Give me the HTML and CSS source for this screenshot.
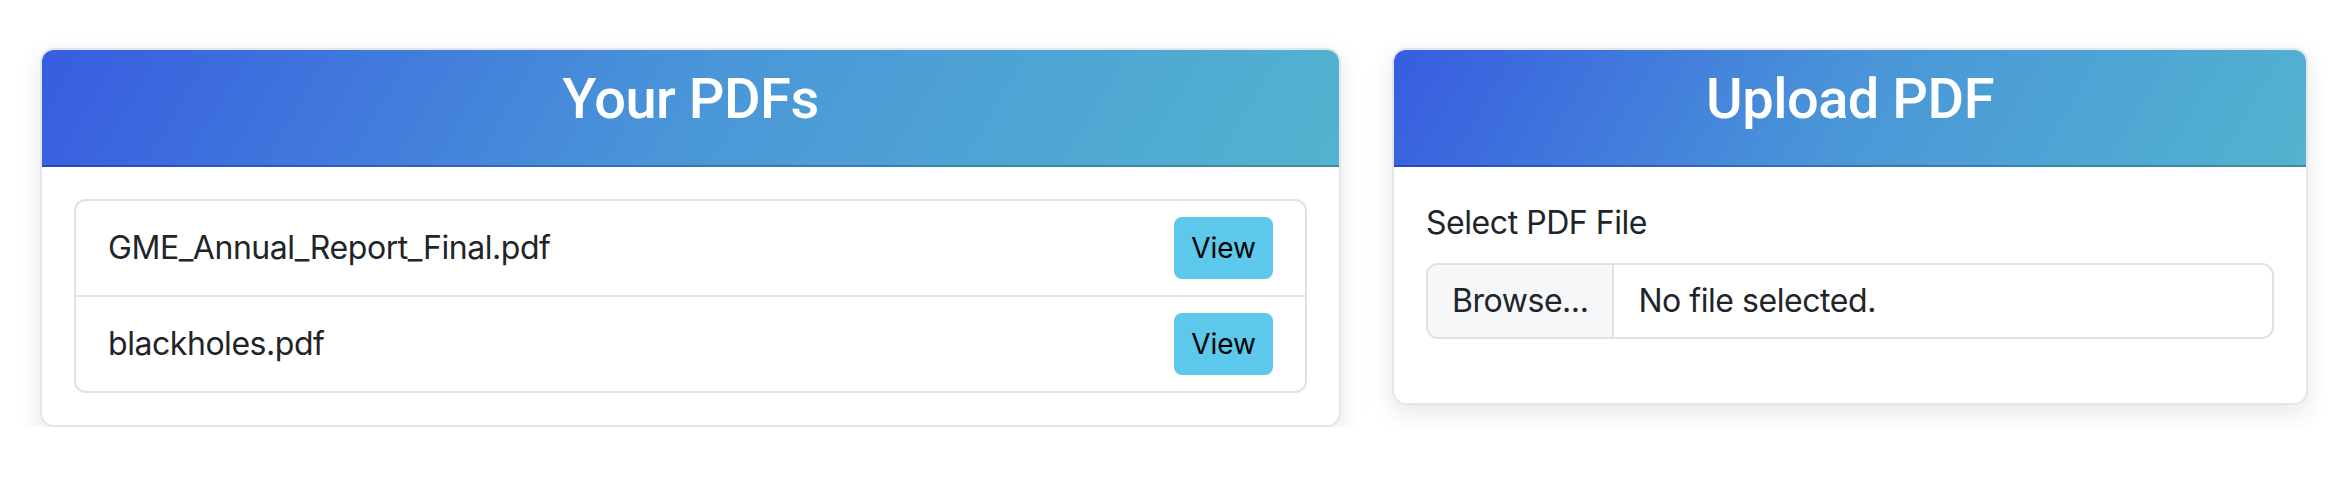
FILE: index.html
```html
<!DOCTYPE html>
<html lang="en">
<head>
<meta charset="utf-8">
<title>PDFs</title>
<link rel="stylesheet" href="styles.css">
</head>
<body>
<main class="page">
  <section class="card">
    <header class="card-header"><h3 class="card-title">Your PDFs</h3></header>
    <div class="card-body">
      <ul class="list">
        <li class="list-item"><span class="file-name">GME_Annual_Report_Final.pdf</span><a class="btn-view" href="#">View</a></li>
        <li class="list-item"><span class="file-name">blackholes.pdf</span><a class="btn-view" href="#">View</a></li>
      </ul>
    </div>
  </section>
  <section class="card">
    <header class="card-header"><h3 class="card-title">Upload PDF</h3></header>
    <div class="card-body">
      <div class="form-group">
        <label class="form-label">Select PDF File</label>
        <div class="file-input">
          <span class="file-browse">Browse...</span>
          <span class="file-status">No file selected.</span>
        </div>
      </div>
    </div>
  </section>
</main>
</body>
</html>
```
FILE: styles.css
```css
html, body {
  margin: 0;
  padding: 0;
  background: #ffffff;
}

body {
  font-family: Inter, "Noto Sans", "Liberation Sans", sans-serif;
  color: #212529;
  font-size: 32px;
  line-height: 1.5;
  letter-spacing: -0.45px;
}

.page {
  display: grid;
  grid-template-columns: 1301fr 916fr;
  gap: 51px;
  align-items: start;
  padding: 48px 38px 0 40px;
}

.card {
  background: #ffffff;
  border: 2px solid #e3e6ec;
  border-radius: 14px;
  overflow: hidden;
  box-shadow: 0 8px 24px rgba(30, 40, 60, 0.11);
}

.card-header {
  padding: 16px 32px 32px;
  background: linear-gradient(120deg, #375ce0 0%, #4a96d8 50%, #52b4cf 100%);
  border-bottom: 2px solid rgba(0, 0, 0, 0.2);
  text-align: center;
}

.card-title {
  margin: 0;
  color: #ffffff;
  font-family: Roboto, Inter, "Liberation Sans", sans-serif;
  font-size: 56px;
  font-weight: 500;
  line-height: 1.2;
  letter-spacing: -0.5px;
}

.card-body {
  padding: 32px;
}

.list {
  list-style: none;
  margin: 0;
  padding: 0;
  border: 2px solid #dee2e6;
  border-radius: 12px;
}

.list-item {
  display: flex;
  justify-content: space-between;
  align-items: center;
  padding: 16px 32px;
}

.list-item + .list-item {
  border-top: 2px solid #dee2e6;
}

.btn-view {
  display: inline-block;
  background: #5cc8eb;
  color: #000000;
  text-decoration: none;
  font-size: 28px;
  line-height: 42px;
  letter-spacing: 0;
  padding: 8px 15px;
  border: 2px solid #5cc8eb;
  border-radius: 8px;
}

.form-group {
  margin-bottom: 32px;
}

.form-label {
  display: block;
  margin-bottom: 16px;
}

.file-input {
  display: flex;
  border: 2px solid #dee2e6;
  border-radius: 12px;
  overflow: hidden;
}

.file-browse {
  background: #f6f7f9;
  padding: 12px 24px;
  border-right: 2px solid #dee2e6;
}

.file-status {
  padding: 12px 24px;
}
```
